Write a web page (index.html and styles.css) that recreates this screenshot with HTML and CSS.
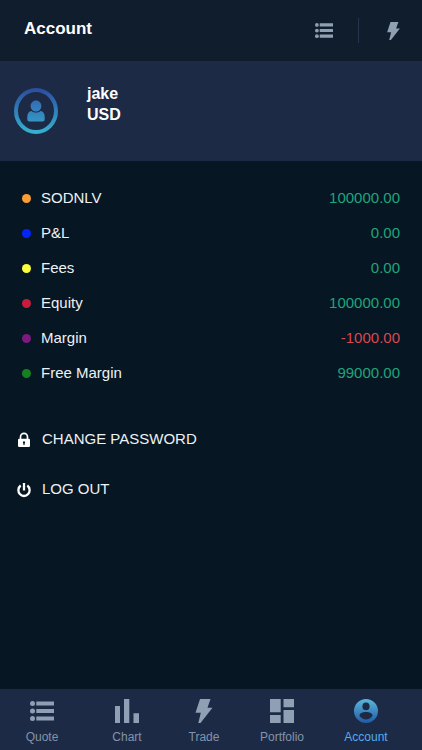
FILE: index.html
```html
<!DOCTYPE html>
<html lang="en">
<head>
<meta charset="utf-8">
<meta name="viewport" content="width=device-width, initial-scale=1">
<title>Account</title>
<link rel="stylesheet" href="styles.css">
</head>
<body>
<svg class="defs" aria-hidden="true">
  <defs>
    <linearGradient id="ring" x1="0" y1="0" x2="0" y2="1">
      <stop offset="0" stop-color="#2b50a0"/><stop offset="1" stop-color="#35b0d0"/>
    </linearGradient>
    <linearGradient id="person" x1="0" y1="0" x2="0" y2="1">
      <stop offset="0" stop-color="#346cb4"/><stop offset="1" stop-color="#3595c4"/>
    </linearGradient>
    <linearGradient id="active" x1="0" y1="0" x2="0" y2="1">
      <stop offset="0" stop-color="#5cb6dc"/><stop offset="1" stop-color="#215ba4"/>
    </linearGradient>
    <symbol id="list" viewBox="0 0 24 20">
      <circle cx="2.5" cy="2.5" r="2.5"/><circle cx="2.5" cy="10" r="2.5"/><circle cx="2.5" cy="17.5" r="2.5"/>
      <path d="M6.3.4H24v4.2H6.3zM6.3 7.9H24v4.2H6.3zM6.3 15.4H24v4.2H6.3z"/>
    </symbol>
    <symbol id="bolt" viewBox="0 0 17 24">
      <path d="M4.500 0H15l-3 8.700h5L5 24H2.800L5.300 13.700H0z"/>
    </symbol>
  </defs>
</svg>
<div class="app">
  <header class="topbar">
    <h1 class="title">Account</h1>
    <div class="tools">
      <button class="tool" type="button" aria-label="List"><svg class="tool-list"><use href="#list"/></svg></button>
      <button class="tool tool-split" type="button" aria-label="Trade"><svg class="tool-bolt"><use href="#bolt"/></svg></button>
    </div>
  </header>
  <section class="profile">
    <svg class="avatar" viewBox="0 0 44 46" aria-hidden="true">
      <ellipse cx="22" cy="23" rx="20" ry="21" fill="none" stroke="url(#ring)" stroke-width="4"/>
      <path fill="url(#person)" d="M22 12.500c3.200 0 5.400 2.500 5.400 5.500S25.200 23.600 22 23.600 16.600 21 16.600 18s2.200-5.500 5.400-5.500zM17.500 23c2.700 2 6.300 2 9 0 2.600.4 4.200 2.600 4.200 5.500V31.500q0 2-2 2H15.300q-2 0-2-2V28.500c0-2.900 1.600-5.100 4.200-5.500z"/>
    </svg>
    <div class="identity">
      <div>jake</div>
      <div>USD</div>
    </div>
  </section>
  <main class="content">
    <dl class="balances">
      <div class="row orange"><dt>SODNLV</dt><dd>100000.00</dd></div>
      <div class="row blue"><dt>P&amp;L</dt><dd>0.00</dd></div>
      <div class="row yellow"><dt>Fees</dt><dd>0.00</dd></div>
      <div class="row red"><dt>Equity</dt><dd>100000.00</dd></div>
      <div class="row purple"><dt>Margin</dt><dd class="negative">-1000.00</dd></div>
      <div class="row green"><dt>Free Margin</dt><dd>99000.00</dd></div>
    </dl>
    <div class="actions">
      <button class="action" type="button">
        <svg class="action-icon" viewBox="0 0 14 16" aria-hidden="true">
          <path d="M3.500 7V5a3.500 3.600 0 0 1 7 0v2" fill="none" stroke="#fff" stroke-width="1.700"/>
          <path fill="#fff" fill-rule="evenodd" d="M2.200 6.700h9.600q1.200 0 1.200 1.200v5.900q0 1.200-1.200 1.200H2.200Q1 15 1 13.800V7.900q0-1.200 1.200-1.200zM7 9.300a1.200 1.200 0 0 0-.6 2.200V13h1.200v-1.500A1.200 1.200 0 0 0 7 9.300z"/>
        </svg>
        CHANGE PASSWORD
      </button>
      <button class="action" type="button">
        <svg class="action-icon" viewBox="0 0 14 16" aria-hidden="true">
          <path d="M3.700 3.500a5.600 5.800 0 1 0 6.600 0M7 1v7.500" fill="none" stroke="#fff" stroke-width="2.300"/>
        </svg>
        LOG OUT
      </button>
    </div>
  </main>
  <nav class="tabs">
    <a class="tab" href="#quote"><svg class="tab-list"><use href="#list"/></svg>Quote</a>
    <a class="tab" href="#chart"><svg class="tab-icon" viewBox="0 0 24 24"><path d="M0 7h5v17H0zM9 0h5.300v24H9zM18.500 14.300H24V24h-5.500z"/></svg>Chart</a>
    <a class="tab" href="#trade"><svg class="tab-icon"><use href="#bolt"/></svg>Trade</a>
    <a class="tab" href="#portfolio"><svg class="tab-icon" viewBox="0 0 24 24"><path d="M0 0h10.700v13.300H0zM13.500 0H24v8.300H13.500zM0 16h10.700v8H0zM13.500 11H24v13H13.500z"/></svg>Portfolio</a>
    <a class="tab current" href="#account" aria-current="page"><svg class="tab-icon" viewBox="0 0 24 24"><path fill="url(#active)" fill-rule="evenodd" d="M12 0a12 12 0 1 0 0 24 12 12 0 0 0 0-24zM12 3.600a3.600 3.800 0 1 1 0 7.600 3.600 3.800 0 0 1 0-7.600zM12 13c3.600 0 6.600 1.600 6.600 3.600-1.500 2.500-3.800 4-6.600 4s-5.100-1.500-6.600-4C5.400 14.600 8.400 13 12 13z"/></svg>Account</a>
  </nav>
</div>
</body>
</html>
```
FILE: styles.css
```css
* {
  box-sizing: border-box;
}

body {
  margin: 0;
  background: #061622;
  color: #eef1f4;
  font-family: "Liberation Sans", Arial, sans-serif;
  font-size: 15px;
  line-height: 20px;
}

button {
  padding: 0;
  border: 0;
  background: none;
  color: inherit;
  font: inherit;
  cursor: pointer;
}

svg {
  display: block;
}

.defs {
  position: absolute;
  width: 0;
  height: 0;
}

.app {
  display: flex;
  flex-direction: column;
  min-height: 100vh;
}

.topbar {
  display: flex;
  align-items: center;
  justify-content: space-between;
  padding: 18px 22px 18px 24px;
  background: #101d2d;
}

.title {
  margin: 0 0 4px;
  color: #fff;
  font-size: 17px;
  line-height: 20px;
}

.tools {
  display: flex;
  align-items: center;
  gap: 25px;
}

.tool {
  display: flex;
  align-items: center;
  height: 25px;
  fill: #8fa0b2;
}

.tool-split {
  padding-left: 28px;
  border-left: 1px solid #24344f;
}

.tool-list {
  width: 18px;
  height: 15px;
}

.tool-bolt {
  width: 13px;
  height: 18px;
}

.profile {
  display: flex;
  align-items: flex-start;
  gap: 29px;
  padding: 22px 14px 27px;
  background: #1c2a45;
}

.avatar {
  width: 44px;
  height: 46px;
  margin-top: 5px;
}

.identity {
  color: #fff;
  font-size: 16px;
  font-weight: bold;
  line-height: 21px;
}

.content {
  flex: 1;
  padding: 27px 22px;
}

.balances {
  display: grid;
  gap: 15px;
  margin: 0;
}

.row {
  display: flex;
  align-items: center;
}

.row::before {
  content: "";
  width: 9px;
  height: 9px;
  margin-right: 10px;
  border-radius: 50%;
  background: currentColor;
}

.row dt {
  flex: 1;
  color: #eef1f4;
}

.row dd {
  margin: 0;
  color: #1fa57c;
}

.row .negative {
  color: #dc4650;
}

.orange { color: #fb9f34; }
.blue { color: #0524fb; }
.yellow { color: #fdfd3c; }
.red { color: #c81c3c; }
.purple { color: #7d1a80; }
.green { color: #178020; }

.actions {
  display: grid;
  justify-items: start;
  gap: 30px;
  margin: 46px 0 0 -5px;
}

.action {
  display: flex;
  align-items: center;
  gap: 11px;
}

.action-icon {
  width: 14px;
  height: 16px;
  margin-top: 2px;
}

.tabs {
  display: grid;
  grid-template-columns: 84fr 86fr 68fr 88fr 80fr;
  padding: 10px 16px 4px 0;
  background: #1c2a45;
}

.tab {
  display: flex;
  flex-direction: column;
  align-items: center;
  gap: 5px;
  color: #8294aa;
  fill: #8fa0b4;
  font-size: 12px;
  line-height: 18px;
  text-decoration: none;
}

.tab-list {
  width: 24px;
  height: 20px;
  margin: 2px 0;
}

.tab-icon {
  width: 24px;
  height: 24px;
}

.current {
  color: #55acee;
}
```
